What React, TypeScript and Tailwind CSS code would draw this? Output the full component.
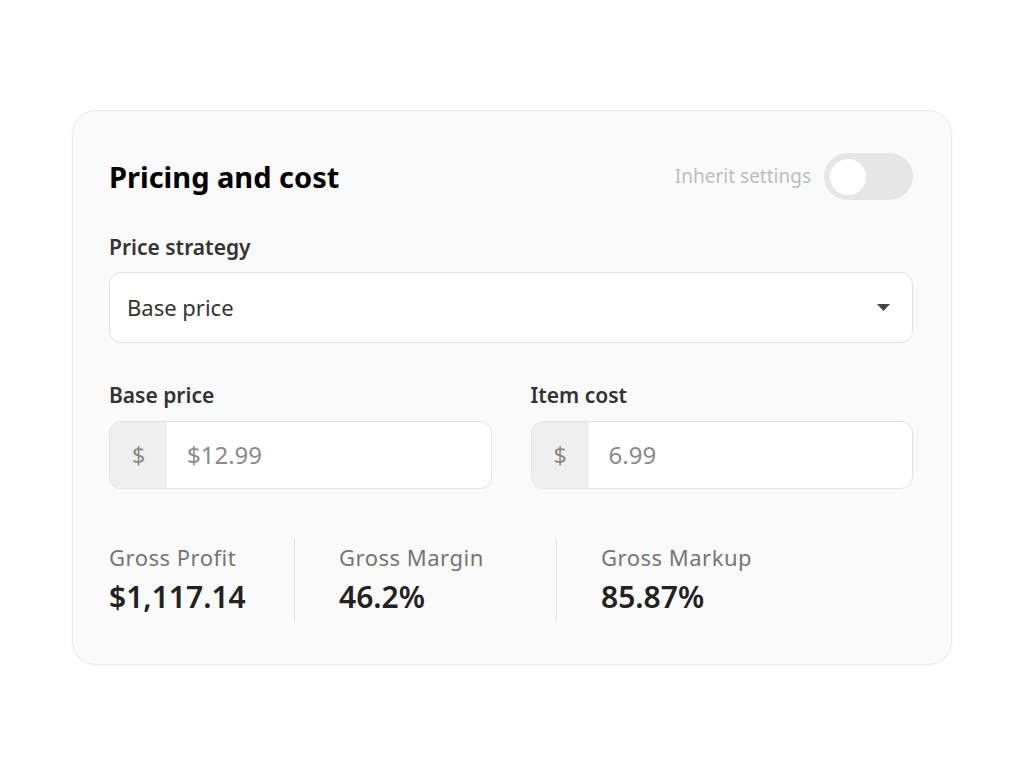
const font = { fontFamily: '"Noto Sans", "Open Sans", Arial, sans-serif' };

const Stat = ({ label, value, className }: { label: string; value: string; className: string }) => (
  <div className={`flex flex-col pb-[8px] pt-[3px] ${className}`}>
    <span className="text-[22px] leading-[30px] tracking-[0.5px] text-[#757575]">{label}</span>
    <span className="mt-[7px] text-[30px] leading-[36px] font-semibold text-[#222]">{value}</span>
  </div>
);

const MoneyInput = ({ value }: { value: string }) => (
  <div className="flex h-[68px] flex-1 overflow-hidden rounded-[12px] border border-[#e2e2e2] bg-white">
    <span className="flex w-[57px] items-center justify-center bg-[#efefef] text-[23px] text-[#888]">$</span>
    <span className="flex items-center pl-[20px] text-[24px] text-[#8a8a8a]">{value}</span>
  </div>
);

export default function App() {
  return (
    <div className="flex min-h-[778px] w-full items-start justify-center bg-white pt-[110px]" style={font}>
      <div className="w-[880px] rounded-[24px] border border-[#ececec] bg-[#fafafa] px-[36px] pb-[41px] pt-[42px] shadow-[0_1px_3px_rgba(0,0,0,0.04)]">
        <div className="flex items-center justify-between pr-[2px]">
          <h2 className="text-[29px] font-bold leading-[40px] text-black">Pricing and cost</h2>
          <div className="flex items-center gap-[13px]">
            <span className="text-[19px] text-[#bdbdbd]">Inherit settings</span>
            <div className="flex h-[47px] w-[89px] items-center rounded-full bg-[#e6e6e6] px-[4px]">
              <div className="h-[40px] w-[40px] rounded-full border-[2px] border-[#e6e6e6] bg-white" />
            </div>
          </div>
        </div>

        <div className="mt-[32px] pr-[2px]">
          <label className="block text-[21px] font-semibold leading-[30px] text-[#333]">Price strategy</label>
          <div className="mt-[10px] flex h-[71px] items-center justify-between rounded-[12px] border border-[#e2e2e2] bg-white pl-[17px] pr-[22px]">
            <span className="text-[22px] text-[#333]">Base price</span>
            <svg width="13" height="8" viewBox="0 0 13 8">
              <path d="M0 0h13L6.5 7z" fill="#444" />
            </svg>
          </div>
        </div>

        <div className="mt-[37px] flex gap-[39px] pr-[2px]">
          <div className="flex flex-1 flex-col">
            <label className="text-[21px] font-semibold leading-[30px] text-[#333]">Base price</label>
            <div className="mt-[11px] flex">
              <MoneyInput value="$12.99" />
            </div>
          </div>
          <div className="flex flex-1 flex-col">
            <label className="text-[21px] font-semibold leading-[30px] text-[#333]">Item cost</label>
            <div className="mt-[11px] flex">
              <MoneyInput value="6.99" />
            </div>
          </div>
        </div>

        <div className="mt-[50px] flex">
          <Stat label="Gross Profit" value="$1,117.14" className="w-[186px] border-r border-[#e2e2e2]" />
          <Stat label="Gross Margin" value="46.2%" className="w-[262px] border-r border-[#e2e2e2] pl-[44px]" />
          <Stat label="Gross Markup" value="85.87%" className="pl-[44px]" />
        </div>
      </div>
    </div>
  );
}
